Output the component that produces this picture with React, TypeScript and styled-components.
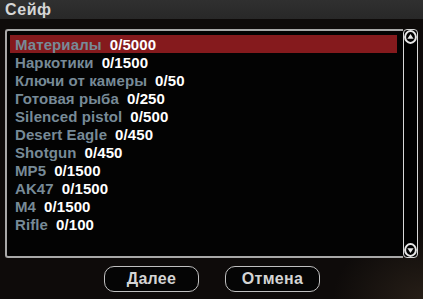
import React from "react";
import styled, { createGlobalStyle } from "styled-components";

const items = [
  { name: "Материалы", value: "0/5000" },
  { name: "Наркотики", value: "0/1500" },
  { name: "Ключи от камеры", value: "0/50" },
  { name: "Готовая рыба", value: "0/250" },
  { name: "Silenced pistol", value: "0/500" },
  { name: "Desert Eagle", value: "0/450" },
  { name: "Shotgun", value: "0/450" },
  { name: "MP5", value: "0/1500" },
  { name: "AK47", value: "0/1500" },
  { name: "M4", value: "0/1500" },
  { name: "Rifle", value: "0/100" },
];

const GlobalStyle = createGlobalStyle`
  html, body {
    margin: 0;
    padding: 0;
    background: #0d0a09;
  }
  * {
    box-sizing: border-box;
  }
`;

const ArrowIcon: React.FC<{ down?: boolean }> = ({ down }) => (
  <svg width="13" height="14" viewBox="0 0 13 14">
    <ellipse cx="6.5" cy="7" rx="5.4" ry="5.9" fill="#000" stroke="#e8e8e8" strokeWidth="2" />
    {down ? (
      <polygon points="3.4,5.2 9.6,5.2 6.5,10" fill="#e8e8e8" />
    ) : (
      <polygon points="3.4,8.8 9.6,8.8 6.5,4" fill="#e8e8e8" />
    )}
  </svg>
);

const App: React.FC = () => {
  return (
    <>
      <GlobalStyle />
      <Window>
        <TitleBar>Сейф</TitleBar>
        <Body>
          <ListArea>
            <ListPanel>
              {items.map((item, i) => (
                <Row key={item.name} selected={i === 0}>
                  <Name>{item.name}</Name>
                  <Value>{item.value}</Value>
                </Row>
              ))}
            </ListPanel>
            <Scrollbar>
              <ArrowIcon />
              <ArrowIcon down />
            </Scrollbar>
          </ListArea>
          <Buttons>
            <Button>Далее</Button>
            <Button>Отмена</Button>
          </Buttons>
        </Body>
      </Window>
    </>
  );
};

const Window = styled.div`
  width: 423px;
  height: 299px;
  display: flex;
  flex-direction: column;
  font-family: "Liberation Sans", Arial, sans-serif;
  background:
    radial-gradient(ellipse 90px 70px at 423px 299px, #261e17 0%, rgba(38, 30, 23, 0) 100%),
    #0e0b0a;
  overflow: hidden;
`;

const TitleBar = styled.div`
  height: 19px;
  padding-left: 5px;
  background: linear-gradient(#303030, #282828);
  color: #d6d6d6;
  font-weight: bold;
  font-size: 16px;
  letter-spacing: 0.6px;
  line-height: 19px;
`;

const Body = styled.div`
  flex: 1;
  display: flex;
  flex-direction: column;
  padding: 10px 5px 0 5px;
`;

const ListArea = styled.div`
  display: flex;
  height: 229px;
`;

const ListPanel = styled.div`
  flex: 1;
  border: 2px solid #a8a8a8;
  border-right: none;
  border-radius: 3px 0 0 3px;
  background: #030303;
  padding: 4px 6px 0 3px;
`;

const Row = styled.div<{ selected?: boolean }>`
  display: flex;
  align-items: center;
  height: 18px;
  padding-left: 5px;
  background: ${({ selected }) => (selected ? "#851a1d" : "transparent")};
  font-size: 15px;
  font-weight: bold;
  letter-spacing: 0.1px;
  white-space: nowrap;
`;

const Name = styled.span`
  color: #778a97;
`;

const Value = styled.span`
  color: #ffffff;
  margin-left: 8px;
`;

const Scrollbar = styled.div`
  width: 15px;
  border: 1.5px solid #d8d8d8;
  border-radius: 4px;
  background: #000;
  display: flex;
  flex-direction: column;
  justify-content: space-between;
  align-items: center;
  svg {
    display: block;
  }
`;

const Buttons = styled.div`
  display: flex;
  justify-content: center;
  gap: 26px;
  margin-top: 8px;
  padding-left: 1px;
`;

const Button = styled.div`
  width: 95px;
  height: 26px;
  border: 1.5px solid #c0c0c0;
  border-radius: 10px;
  background: #050505;
  color: #d4d4d4;
  font-size: 16px;
  font-weight: bold;
  letter-spacing: 0.3px;
  display: flex;
  align-items: center;
  justify-content: center;
`;

export default App;
